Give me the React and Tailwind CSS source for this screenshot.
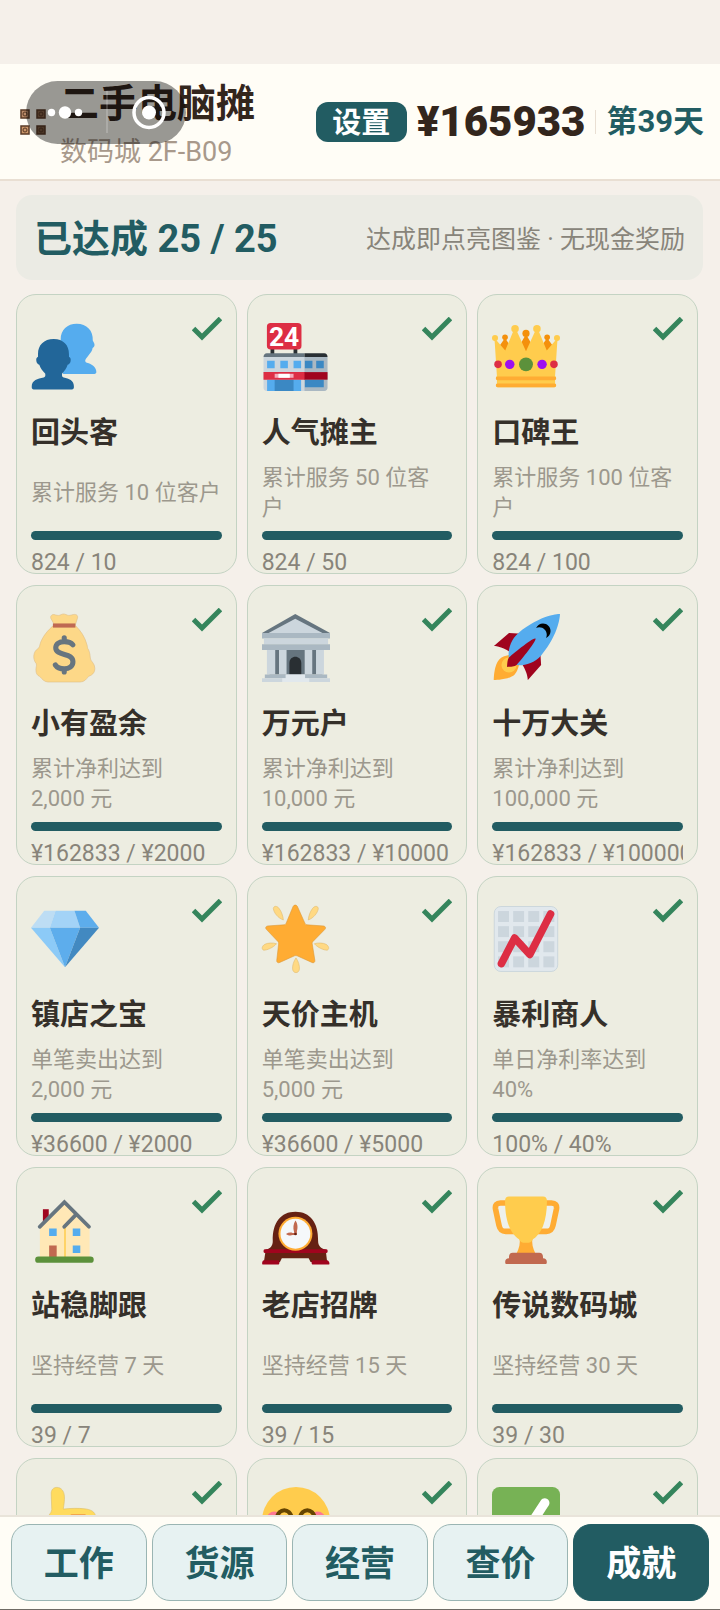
import clsx from "clsx";

function BustsIcon() {
  return (
    <>
      <path
        fill="#55ACEE"
        d="M24.2.4c-5 0-8.5 3.2-8.5 8.3L17 27h16.6c.6 0 1-.4 1-1 0-2.8-2.4-4.3-5-5-.9-.3-1.2-1.200-.6-2l2.800-3.600c.5-.8.7-1.400.8-2.200.8-.3 1.300-1.400.9-2.400l-.8-1.500C33 4 29.500.4 24.200.4z"
      />
      <path
        fill="#226699"
        d="M12 8.500c-5.200 0-8.300 3.200-8.300 8v1.400c-.8.4-1 1-.9 2 .1 1.300.7 2 1.600 2.200.6 1.800 1.700 3.300 3.100 4.600.3 1.200 0 1.900-.8 2.200C3.500 29.400.4 30.600.4 33.400v.8c0 .6.4 1 1 1h20.300c.6 0 1-.4 1-1v-.8c0-2.800-2.600-4-5.400-4.500-.8-.3-1.100-1-.8-2.200 1.300-1.300 2.300-2.800 2.900-4.600.9-.2 1.500-.9 1.600-2.200.1-1-.1-1.600-.9-2v-1.400c0-4.800-3-8-8.100-8z"
      />
    </>
  );
}

function StoreIcon() {
  return (
    <>
      <path fill="#292F33" d="M4.500 13h2v4h-2zM16.700 13h2v4h-2z" />
      <rect x="2.600" width="18.300" height="14" rx="2" fill="#DD2E44" />
      <text x="11.700" y="12" textAnchor="middle" fontSize="14" fontWeight="700" fill="#fff" fontFamily="Roboto, sans-serif">
        24
      </text>
      <path fill="#CCD6DD" d="M.8 18h22v18H2.500c-1 0-1.700-.7-1.700-1.700z" />
      <path fill="#AAB8C2" d="M22.500 18h12.200v16.300c0 1-.7 1.700-1.700 1.700H22.500z" />
      <path fill="#66757F" d="M2.500 16h20v2H.8c0-1.200.8-2 1.700-2z" />
      <path fill="#292F33" d="M22.500 16H33c1 0 1.700.8 1.700 2H22.500z" />
      <path fill="#55ACEE" d="M2.700 20h4v4h-4zM9.700 20h4v4h-4zM16.700 20h4v4h-4zM2.700 30h18v6h-18z" />
      <path fill="#3B88C3" d="M22.700 20h4v4h-4zM28.700 20h4v4h-4zM22.700 30h10v4h-10zM6.700 30h10v6h-10z" />
      <path fill="#DD2E44" d="M.8 26h22v4h-22z" />
      <path fill="#A0041E" d="M22.500 26h12.200v4H22.500z" />
      <path fill="#F4ABBA" d="M6.700 26.900h10V29h-10z" />
      <path fill="#fff" d="M8.700 26.900h6V29h-6z" />
    </>
  );
}

function CrownIcon() {
  return (
    <>
      <g fill="#F4900C">
        <circle cx="6.900" cy="7.600" r="1.500" />
        <circle cx="18" cy="5.500" r="1.900" />
        <circle cx="29.200" cy="7.600" r="1.500" />
        <path d="M6.900 8l3 4.500L7 16l-3-4zM18 6l3.500 6-3.500 5-3.500-5zM29.200 8l3 4-3.200 4-3-3.500z" />
      </g>
      <g fill="#FFCC4D">
        <circle cx="12.200" cy="3" r="2" />
        <circle cx="23.800" cy="3" r="2" />
        <circle cx="1.600" cy="8" r="1.600" />
        <circle cx="34.400" cy="8" r="1.600" />
        <path d="M1.300 8L7 14.600 11.400 4h1.600l5 11 5-11h1.600L29 14.600 34.700 8 33.400 28c.6.5.6 1.500 0 2v2c.8.500.6 2-.4 2H3c-1 0-1.200-1.500-.4-2v-2c-.6-.5-.6-1.500 0-2z" />
      </g>
      <path stroke="#FFAC33" strokeWidth="2" strokeLinecap="round" d="M3 29.300h30M3 33h30" />
      <circle cx="3.200" cy="21.900" r="2" fill="#DD2E44" />
      <circle cx="32.800" cy="21.900" r="2" fill="#DD2E44" />
      <circle cx="9.400" cy="21.900" r="2.500" fill="#9D0FEF" />
      <circle cx="26.500" cy="21.900" r="2.500" fill="#9D0FEF" />
      <circle cx="18" cy="21.900" r="3.700" fill="#5C913B" />
    </>
  );
}

function MoneyBagIcon() {
  return (
    <>
      <path
        fill="#FDD888"
        stroke="#DDBB85"
        strokeWidth=".3"
        d="M12 5L10.500 2.300C10 .9 11.400-.2 13 .5c1.500.4 2 .3 3-.2.800-.4 1.700-.4 2.500 0 1 .5 1.800.6 3 .2 2.200-.8 3.600.1 3.100 1.700L23.400 6c3 3 5.100 6 6.300 10.500.3 1 .1 1.700.7 2.300 1 2 .8 3.600 1.100 5 .3 1.400 2.300 2.400 2.300 5 0 2.600-1.800 3.700-3.300 4.200-1.200 1.500-2.200 3-4.500 3H9c-2 0-3-1.500-4.500-3-1.200-.5-1.900-1.500-1.900-3.500 0-1.300.5-2 .2-3.200-2-2.300-1.800-6.300.9-8 .8-.5.8-1.200 1-2C5.900 12 9 8.500 12 6z"
      />
      <path fill="#BF6952" d="M11.600 5h11.900v2.200H11.600z" />
      <path
        fill="none"
        stroke="#67757F"
        strokeWidth="2.700"
        strokeLinecap="round"
        d="M22.200 16.300c-1.200-1.400-2.700-1.700-4.600-1.700-2.700 0-4.500 1.200-4.500 3.300 0 2.200 2 2.800 4.600 3.500 2.500.7 4.500 1.400 4.500 3.900 0 2.300-2 3.700-4.600 3.700-2.200 0-3.800-.6-4.700-2M17.600 12.600v1.500M17.600 29.500v1.200"
      />
    </>
  );
}

function BankIcon() {
  return (
    <>
      <path fill="#66757F" d="M17.600 0L36 10H0z" />
      <path fill="#AAB8C2" d="M0 10h36v3H0z" />
      <path fill="#CCD6DD" d="M17.600 2.500L32 10H3.500zM1 13h34v3H1z" />
      <path fill="#AAB8C2" d="M0 16h36v3H0z" />
      <path fill="#66757F" d="M4 19h28v13H4z" />
      <path fill="#CCD6DD" d="M2.600 19H7v13H2.600zM9 19h4v13H9zM22.600 19h4v13h-4zM28.600 19h4.200v13h-4.200z" />
      <path fill="#292F33" d="M14.500 32v-6c0-4.500 6.300-4.500 6.300 0v6z" />
      <path fill="#AAB8C2" d="M1.500 32h33v2h-33z" />
      <path fill="#CCD6DD" d="M0 34h36v2H0z" />
      <path fill="#E1E8ED" d="M12.500 32h10.300v2H25v2H10.700v-2h1.800z" />
    </>
  );
}

function RocketIcon() {
  return (
    <>
      <path fill="#A0041E" d="M1 17l8-7 16 1 1 16-7 8s.001-5.999-6-12-12-6-12-6z" />
      <path fill="#FFAC33" d="M.973 35s-.036-7.979 2.985-11S15 21.187 15 21.187 14.999 29 11.999 32c-3 3-11.026 3-11.026 3z" />
      <circle fill="#FFCC4D" cx="9" cy="27" r="4" />
      <path fill="#55ACEE" d="M35.999 0s-10 0-22 10c-6 5-6 14-4 16s11 2 16-4c10-12 10-22 10-22z" />
      <path d="M26.999 5c-1.623 0-3.013.971-3.641 2.360.502-.227 1.055-.360 1.641-.360 2.209 0 4 1.791 4 4 0 .586-.133 1.139-.359 1.640 1.389-.627 2.359-2.017 2.359-3.640 0-2.209-1.791-4-4-4z" />
      <path fill="#A0041E" d="M8 28s0-4 1-5 13.001-10.999 14-10-9.001 13-10.001 14S8 28 8 28z" />
    </>
  );
}

function GemIcon() {
  return (
    <>
      <path fill="#BDDDF4" d="M7 3h6l-3 9H0z" />
      <path fill="#A3D3F7" d="M13 3h10l3 9H10z" />
      <path fill="#5DADEC" d="M23 3h6l7 9H26z" />
      <path fill="#8CCAF7" d="M0 12h10l8 21z" />
      <path fill="#5DADEC" d="M10 12h16l-8 21z" />
      <path fill="#4289C1" d="M26 12h10L18 33z" />
    </>
  );
}

function StarIcon() {
  return (
    <>
      <g fill="#FFD983" stroke="#E0B96A" strokeWidth=".3">
        <path d="M11.300 7.900C8.500 7 6.200 4 6 1.900 6.200.3 8 .3 9.100 1.900c1.200 1.600 2.100 4 2.200 6zM24.500 7.900c.1-2 1-4.400 2.200-6C27.900.3 29.600.3 29.800 1.900c-.2 2.100-2.500 5.100-5.300 6zM7.700 20.500c-1.700 2-5 3.500-6.800 3.400-1.300-.4-1-2.200.6-3.100 1.600-.8 4.200-.9 6.200-.3zM27.700 20.500c2-.6 4.600-.5 6.200.3 1.600.9 1.900 2.700.6 3.100-1.800.1-5.100-1.400-6.800-3.400zM18 28c1.300 1.800 2 4.200 1.800 6-.3 2.400-3.300 2.400-3.600 0-.2-1.800.500-4.200 1.800-6z" />
      </g>
      <path
        fill="#FFAC33"
        stroke="#D99635"
        strokeWidth=".3"
        d="M18.700.7l4 8.900c.2.500.6.800 1.100.9l8.800.6c1 .1 1.400 1.100.7 1.800l-6.300 6.400c-.4.400-.5.800-.4 1.300l1.400 8.800c.1 1-.8 1.500-1.600 1l-7.800-3.500c-.5-.2-.9-.2-1.400 0l-7.800 3.500c-.9.500-1.700-.1-1.600-1l1-8.800c.1-.500-.1-1-.4-1.300L2.300 12.900c-.7-.7-.3-1.700.7-1.800l8.700-.6c.5-.1.9-.4 1.100-.9L16.500.7c.5-.900 1.700-.9 2.200 0z"
      />
    </>
  );
}

function ChartIcon() {
  const cells = [3.2, 11.2, 19.2, 27.2];
  return (
    <>
      <rect x="1.200" y=".8" width="33.600" height="34.400" rx="3.500" fill="#E1E8ED" stroke="#C3D0D8" strokeWidth=".4" />
      {cells.map((y) =>
        cells.map((x) => <rect key={`${x}-${y}`} x={x} y={y} width="5.800" height="5.800" fill="#CCD6DD" />)
      )}
      <path fill="none" stroke="#DD2E44" strokeWidth="4" strokeLinecap="round" strokeLinejoin="round" d="M5 31l7-13.500 8 8.700L31 4.800" />
    </>
  );
}

function HouseIcon() {
  return (
    <>
      <path fill="#A0041E" d="M6.300 7h3.100v7H6.300z" />
      <path fill="#FFE8B6" d="M4.700 16L17.700 3 31 16v17H4.700z" />
      <path fill="#FFCC4D" d="M17.600 15.500h.8V33h-.8z" />
      <path fill="none" stroke="#66757F" strokeWidth="2" strokeLinecap="round" d="M4.600 16.300L17.700 3.300l13 13M23.200 10.500l-5.600 5.800" />
      <path fill="#55ACEE" d="M9.600 17.200h4v4h-4zM22.100 17.200h4v4h-4zM22.100 26.200h4v4h-4z" />
      <path fill="#C1694F" d="M9.600 26.200h4V33h-4z" />
      <rect x="2.200" y="32" width="31" height="3.400" rx="1.700" fill="#5C913B" />
    </>
  );
}

function MantelClockIcon() {
  return (
    <>
      <path fill="#662113" d="M2 28.300c2.500-.3 3.700-2 3.700-4.500C5.400 14 10 8.300 17.700 8.300S30 14 29.700 23.800c0 2.500 1.500 4.200 4 4.500l.8 6.700h-8.800l-1-2H10.500l-1 2H1z" />
      <path fill="#A0041E" d="M1.500 28.200h32.600c.9 0 .9 2 0 2H1.500c-.9 0-.9-2 0-2zM1 34h7.500c1 0 1 2.300 0 2.300H.5c-.7 0-.5-2.300.5-2.300zM27 34h7.500c1 0 1.700 2.300.8 2.300H27c-1 0-1-2.300 0-2.300z" />
      <circle cx="17.700" cy="20" r="9" fill="#FFAC33" />
      <circle cx="17.700" cy="20" r="7.900" fill="#F5F8FA" />
      <path fill="#C1694F" d="M17.700 13c1.300 1.700 1.300 4 .8 5.500l-.1 2.200h-1.200l-.3-2.100c-.5-1.500-.4-3.800.8-5.600zM12.700 20.100c1.200-.8 2.500-.9 3.500-.5h1.800v1.100h-1.800c-1 .4-2.300.3-3.500-.6z" />
      <circle cx="17.700" cy="20.100" r=".7" fill="#662113" />
    </>
  );
}

function TrophyIcon() {
  return (
    <>
      <path
        fill="#EEF1EC"
        stroke="#FFAC33"
        strokeWidth="3"
        d="M10 3.700H4.500C2.500 3.700 1.500 4.800 1.900 7l1.800 8.500c.5 2.300 1.300 3.200 3.500 3.200H12M26 3.700h5.500c2 0 3 1.100 2.600 3.300l-1.800 8.500c-.5 2.300-1.300 3.200-3.500 3.200H24"
      />
      <path fill="#FFAC33" d="M14.500 22h7c-.6 3 .1 5.700 1.500 8.500H13c1.400-2.800 2.100-5.500 1.500-8.500z" />
      <path fill="#FFCC4D" d="M9 .3h18c1.300 0 2.100.8 2.100 2.200 0 11-3 17.700-7.600 20.500-.5 1.100-1.300 1.700-2.200 1.700h-2.600c-.9 0-1.700-.6-2.200-1.700C9.900 20.200 6.900 13.500 6.900 2.500 6.900 1.100 7.700.3 9 .3z" />
      <path fill="#C1694F" d="M11 30h14c1.300 0 2 .8 2 2.300v.7c1.300 0 2 .7 2 1.700v.6c0 .5-.3.7-.8.7H7.800c-.5 0-.8-.2-.8-.7v-.6c0-1 .7-1.700 2-1.700v-.7c0-1.500.7-2.300 2-2.300z" />
    </>
  );
}

function ThumbIcon() {
  return (
    <>
      <path
        fill="#FFDB5E"
        stroke="#D9BB67"
        strokeWidth=".3"
        d="M10.700 4C10.500 1.300 12 .2 13.700.2c2.300 0 3.800 1.800 4 4.800.1 2.500-.3 4.500-.6 6.700 4-.5 8-.5 11-.2 3.500.3 6 1.700 6 4V32c0 2-2 4-5 4H12c-4 0-8-2-8-6v-9c0-3 6.500-5 7-9z"
      />
      <path stroke="#EE9547" strokeWidth="1.200" strokeLinecap="round" d="M21.500 15h7" />
    </>
  );
}

function BlushIcon() {
  return (
    <>
      <circle cx="18" cy="18" r="18" fill="#FFCC4D" />
      <circle cx="6.500" cy="17" r="4" fill="#FF7892" />
      <circle cx="29.500" cy="17" r="4" fill="#FF7892" />
      <path fill="none" stroke="#664500" strokeWidth="2.200" strokeLinecap="round" d="M7.800 16.500c1-5.600 7-5.600 8 0M20 16.500c1-5.600 7-5.600 8 0" />
      <path fill="none" stroke="#664500" strokeWidth="2" strokeLinecap="round" d="M10 24c4 5 12 5 16 0" />
    </>
  );
}

function CheckBoxIcon() {
  return (
    <>
      <rect width="36" height="36" rx="4" fill="#77B255" />
      <path
        fill="#fff"
        d="M29.280 6.362c-1.156-.751-2.704-.422-3.458.736L14.936 23.877l-5.029-4.650c-1.014-.938-2.596-.875-3.533.138-.937 1.014-.875 2.596.139 3.533l7.209 6.666c.480.445 1.090.665 1.696.665.673 0 1.534-.282 2.099-1.139.332-.506 12.500-19.270 12.500-19.270.751-1.159.421-2.707-.737-3.458z"
      />
    </>
  );
}

const achievements = [
  { icon: BustsIcon, title: "回头客", desc: "累计服务 10 位客户", progress: "824 / 10" },
  { icon: StoreIcon, title: "人气摊主", desc: "累计服务 50 位客\n户", progress: "824 / 50" },
  { icon: CrownIcon, title: "口碑王", desc: "累计服务 100 位客\n户", progress: "824 / 100" },
  { icon: MoneyBagIcon, title: "小有盈余", desc: "累计净利达到\n2,000 元", progress: "¥162833 / ¥2000" },
  { icon: BankIcon, title: "万元户", desc: "累计净利达到\n10,000 元", progress: "¥162833 / ¥10000" },
  { icon: RocketIcon, title: "十万大关", desc: "累计净利达到\n100,000 元", progress: "¥162833 / ¥100000" },
  { icon: GemIcon, title: "镇店之宝", desc: "单笔卖出达到\n2,000 元", progress: "¥36600 / ¥2000" },
  { icon: StarIcon, title: "天价主机", desc: "单笔卖出达到\n5,000 元", progress: "¥36600 / ¥5000" },
  { icon: ChartIcon, title: "暴利商人", desc: "单日净利率达到\n40%", progress: "100% / 40%" },
  { icon: HouseIcon, title: "站稳脚跟", desc: "坚持经营 7 天", progress: "39 / 7" },
  { icon: MantelClockIcon, title: "老店招牌", desc: "坚持经营 15 天", progress: "39 / 15" },
  { icon: TrophyIcon, title: "传说数码城", desc: "坚持经营 30 天", progress: "39 / 30" },
  { icon: ThumbIcon },
  { icon: BlushIcon },
  { icon: CheckBoxIcon },
];

const tabs = ["工作", "货源", "经营", "查价", "成就"];

function AchievementCard({ icon: Icon, title, desc, progress }) {
  return (
    <li className="flex flex-col rounded-[20px] border border-[#c4d3c3] bg-[#edede1] px-3.5 pt-[22px]">
      <div className="flex items-start justify-between">
        <svg viewBox="0 0 36 36" className="mt-1.5 h-[68px] w-[68px] shrink-0 overflow-visible">
          <Icon />
        </svg>
        <svg viewBox="0 0 30 24" className="h-6 w-[30px]">
          <path d="M1.500 11.500l8.500 8.500L28.500 1.500" fill="none" stroke="#35855c" strokeWidth="5" />
        </svg>
      </div>
      {title && (
        <>
          <h2 className="mt-[22px] text-[29px] leading-10 font-bold text-[#35302a]">{title}</h2>
          <p className="mt-2.5 flex h-[60px] shrink-0 items-center text-[22px] leading-[30px] whitespace-pre-line text-[#9c988d]">
            {desc}
          </p>
          <div className="mt-2 h-[9px] shrink-0 rounded-full bg-[#225c62]" />
          <p className="mt-2.5 shrink-0 overflow-x-clip text-[23px] leading-[26px] whitespace-nowrap text-[#88847a]">
            {progress}
          </p>
        </>
      )}
    </li>
  );
}

function BrandIcon() {
  return (
    <svg viewBox="0 0 26 26" className="h-[26px] w-[26px] shrink-0">
      {[
        [0, 0, "#b98a68"],
        [16, 0, "#8a6448"],
        [0, 16, "#c99468"],
        [16, 16, "#7d5a40"],
      ].map(([x, y, color]) => (
        <g key={`${x}-${y}`}>
          <rect x={x + 1} y={y + 1} width="8" height="8" fill={color} stroke="#5a3a26" strokeWidth="1.500" />
          <circle cx={x + 5} cy={y + 5} r="2" fill="none" stroke="#5a3a26" />
        </g>
      ))}
    </svg>
  );
}

/* Floating mini-program capsule */
function Capsule() {
  return (
    <div className="absolute top-[81px] left-[26px] h-[63px] w-40 rounded-full bg-black/40">
      <svg viewBox="0 0 160 63" className="h-full w-full">
        <g fill="#fff">
          <circle cx="25.500" cy="31.500" r="3.700" />
          <circle cx="39" cy="31.500" r="6.200" />
          <circle cx="52.500" cy="31.500" r="3.700" />
          <circle cx="123" cy="31.500" r="7" />
        </g>
        <path stroke="#fff" strokeOpacity=".25" strokeWidth="1.500" d="M81 10v42" />
        <circle cx="123" cy="31.500" r="15" fill="none" stroke="#fff" strokeWidth="3.500" />
      </svg>
    </div>
  );
}

export default function App() {
  return (
    <div className="relative flex h-screen flex-col bg-[#f5f0ea] pt-16 font-['Roboto','Noto_Sans_CJK_SC',sans-serif]">
      <header className="flex items-center justify-between border-b-2 border-[#e9dfd3] bg-[#fffdf6] pt-2 pr-4 pb-[7px] pl-5">
        <div className="flex items-center gap-3.5">
          <BrandIcon />
          <div className="pt-1">
            <h1 className="text-[39px] leading-[56px] font-bold text-[#33261d]">二手电脑摊</h1>
            <p className="text-[27px] leading-10 text-[#a8998b]">数码城 2F-B09</p>
          </div>
        </div>

        <div className="flex items-center gap-2.5">
          <button className="h-10 w-[91px] rounded-xl bg-[#225c62] pt-0.5 text-[29px] leading-[38px] font-bold text-white">
            设置
          </button>
          <span className="text-[42px] leading-[56px] font-black text-[#33261d]">¥165933</span>
          <span className="h-6 w-px bg-[#e9dfd3]" />
          <span className="text-[31px] leading-10 font-bold text-[#225c62]">第39天</span>
        </div>
      </header>

      <main className="min-h-0 flex-1 overflow-y-auto pt-3.5 pr-[17px] pl-4 [scrollbar-width:none]">
        <section className="flex items-center justify-between rounded-2xl bg-[#ebebe4] px-[18px] pt-4 pb-3">
          <h2 className="text-[38px] leading-[57px] font-bold text-[#225c62]">已达成 25 / 25</h2>
          <p className="text-[25px] leading-10 text-[#88847a]">达成即点亮图鉴 · 无现金奖励</p>
        </section>

        <ul className="mt-3.5 mr-[5px] grid auto-rows-[280px] grid-cols-3 gap-x-2.5 gap-y-[11px]">
          {achievements.map((item, i) => (
            <AchievementCard key={i} {...item} />
          ))}
        </ul>
      </main>

      <nav className="grid grid-cols-5 gap-[5px] border-t-2 border-b border-t-[#e9e4da] border-b-[#6f6b64] bg-[#fffdf6] px-[11px] pt-[7px] pb-2">
        {tabs.map((tab) => (
          <button
            key={tab}
            className={clsx(
              "h-[77px] rounded-[18px] border pt-1.5 text-[35px] font-bold",
              tab === "成就"
                ? "border-[#225c62] bg-[#225c62] text-white"
                : "border-[#9ab5b3] bg-[#e7f2f2] text-[#225c62]"
            )}
          >
            {tab}
          </button>
        ))}
      </nav>

      <Capsule />
    </div>
  );
}
